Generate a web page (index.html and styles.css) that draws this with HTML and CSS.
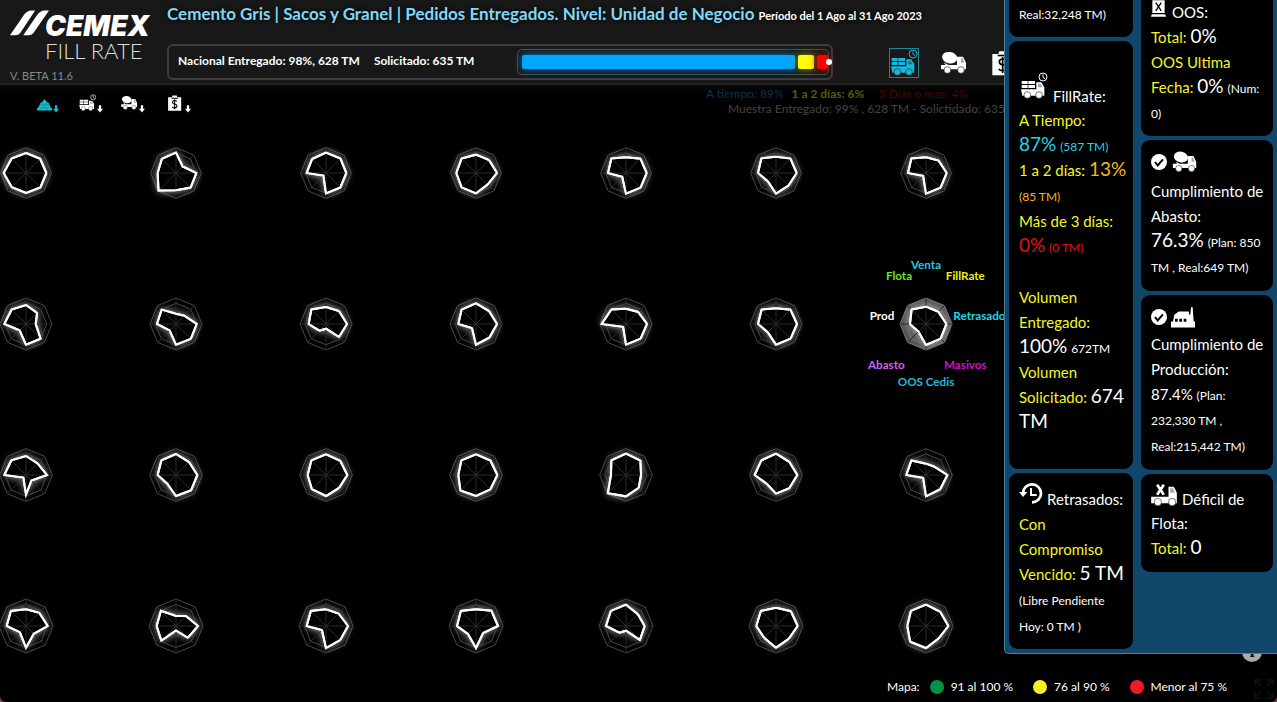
FILE: index.html
```html
<!DOCTYPE html>
<html lang="es">
<head>
<meta charset="utf-8">
<title>CEMEX Fill Rate</title>
<link rel="stylesheet" href="styles.css">
</head>
<body>
<svg class="defs" aria-hidden="true">
  <symbol id="truck" viewBox="0 0 90 90">
    <path d="M8 30h18v9H8zM28 30h20v9H28zM8 42h18v9H8zM28 42h20v9H28z"/>
    <path d="M6 55h46V34h15l9 15v25H10z"/>
    <path class="cut" d="M57 38h8l6 11H57z" fill-opacity=".35"/>
    <circle class="wheel" cx="25" cy="72" r="10"/><circle class="wheel" cx="60" cy="72" r="10"/>
    <circle cx="72" cy="18" r="12" fill="none" stroke="currentColor" stroke-width="3"/>
    <path d="M72 10v9l6 4" fill="none" stroke="currentColor" stroke-width="3"/>
  </symbol>
  <symbol id="mixer" viewBox="0 0 90 90">
    <ellipse cx="32" cy="29" rx="23" ry="17" transform="rotate(12 32 29)"/>
    <path d="M14 43l14 8h28l2-7v18h-4V26h18l9 18v20H6V51h14z"/>
    <path class="cut" d="M66 30h4l6 14H66z" fill-opacity=".35"/>
    <circle class="wheel" cx="25" cy="66" r="10"/><circle class="wheel" cx="66" cy="66" r="10"/>
  </symbol>
  <symbol id="clip" viewBox="0 0 90 90">
    <path d="M10 18h18l3-8h20l3 8h18v64H10z"/>
    <path class="cut" d="M26 20h30v5H26z"/>
    <path class="cutline" d="M52 38q-4-5-11-5-10 0-10 8t10 9 11 9-11 9q-8 0-12-5M41 27v48" fill="none" stroke-width="5"/>
  </symbol>
  <symbol id="pile" viewBox="0 0 90 90">
    <path d="M45 12l14 16 10 6 8 18 12 16q0 8-8 8H8q-8 0-6-8l12-16 8-18 9-6z"/>
    <path class="cutline" d="M20 44h50M12 60h66M34 28v16M56 28v16M28 60v16M58 60v16M45 44v16" fill="none" stroke-width="3" opacity=".4"/>
  </symbol>
  <symbol id="check" viewBox="0 0 24 24">
    <circle cx="12" cy="12" r="12"/><path class="cutline" d="M6 12l4 5 8-9" fill="none" stroke-width="3"/>
  </symbol>
  <symbol id="factory" viewBox="0 0 72 62">
    <path d="M0 61V43h6l4-20 13-10h30l2 10h3L60 0h5l3 43h4v18z"/>
    <path class="cut" d="M12 35h8v9h-8zM25 35h8v9h-8zM38 35h8v9h-8z"/>
  </symbol>
  <symbol id="history" viewBox="0 0 72 66">
    <path d="M12 33a27 27 0 1 1 27 28" fill="none" stroke="currentColor" stroke-width="8"/>
    <path d="M0 30h25L12 45zM33 18h6v18h14v6H33z"/>
  </symbol>
  <symbol id="xtruck" viewBox="0 0 80 66">
    <path d="M0 38h52V8h16l9 18v32H0z"/>
    <path class="cut" d="M57 13h8l6 13H57z" fill-opacity=".35"/>
    <path d="M18 2l20 30M38 2L18 32" fill="none" stroke="currentColor" stroke-width="8"/>
    <circle class="wheel" cx="20" cy="54" r="11"/><circle class="wheel" cx="63" cy="54" r="11"/>
  </symbol>
  <symbol id="xbox" viewBox="0 0 44 48">
    <path d="M4 0h36v36l4 12H0l4-12z"/><path class="cutline" d="M14 7l16 24M30 7L14 31M2 39h40" fill="none" stroke-width="4"/>
  </symbol>
  <symbol id="down" viewBox="0 0 16 20"><path d="M5 0h6v9h5l-8 10L0 9h5z"/></symbol>
</svg>
<div class="app">
  <header class="top">
    <div class="brand">
      <div class="logo">
        <svg class="slashes" viewBox="0 0 118 76"><path d="M0 75L42 14Q52 0 64 0h12L32 67q-5 8-14 8zM40 75L82 14Q92 0 104 0h14L72 67q-5 8-14 8z"/></svg>
        <span class="cemex">CEMEX</span>
      </div>
      <div class="fill">FILL RATE</div>
      <div class="version">V. BETA 11.6</div>
    </div>
    <div class="summary">
      <h1>Cemento Gris | Sacos y Granel | Pedidos Entregados. Nivel: Unidad de Negocio <small>Período del 1 Ago al 31 Ago 2023</small></h1>
      <div class="row">
        <div class="totals">
          <span class="amounts"><span>Nacional Entregado: 98%, 628 TM</span><span>Solicitado: 635 TM</span></span>
          <div class="meter"><i class="seg blue"></i><i class="seg yellow"></i><i class="seg red"></i><i class="dot"></i></div>
        </div>
        <nav class="modes">
          <button class="mode active" aria-label="Fill rate"><svg><use href="#truck"/></svg></button>
          <button class="mode" aria-label="Abasto"><svg><use href="#mixer"/></svg></button>
          <button class="mode" aria-label="Pedidos"><svg><use href="#clip"/></svg></button>
        </nav>
      </div>
    </div>
  </header>
  <main class="map">
    <div class="strip">
      <nav class="tools">
        <button class="tool cyan" aria-label="Venta"><svg class="ico"><use href="#pile"/></svg><svg class="arr"><use href="#down"/></svg></button>
        <button class="tool" aria-label="Fill rate"><svg class="ico"><use href="#truck"/></svg><svg class="arr"><use href="#down"/></svg></button>
        <button class="tool" aria-label="Abasto"><svg class="ico"><use href="#mixer"/></svg><svg class="arr"><use href="#down"/></svg></button>
        <button class="tool" aria-label="Pedidos"><svg class="ico"><use href="#clip"/></svg><svg class="arr"><use href="#down"/></svg></button>
      </nav>
      <div class="sample">
        <div class="days"><span class="d1">A tiempo: 89%</span><b class="d2">1 a 2 días: 6%</b><span class="d3">3 Días o mas: 4%</span></div>
        <div class="muestra">Muestra Entregado: 99% , 628 TM - Solictidado: 635 TM</div>
      </div>
    </div>
    <div class="radars" id="radars"></div>
    <footer class="legend">
      <span>Mapa:</span>
      <span class="key"><i class="green"></i>91 al 100 %</span>
      <span class="key"><i class="amber"></i>76 al 90 %</span>
      <span class="key"><i class="crimson"></i>Menor al 75 %</span>
    </footer>
    <button class="info" aria-label="Información">i</button>
    <button class="expand" aria-label="Pantalla completa"><svg viewBox="0 0 20 20"><path d="M1 7V1h6M1 1l6 6M13 1h6v6M19 1l-6 6M1 13v6h6M1 19l6-6M19 13v6h-6M19 19l-6-6"/></svg></button>
  </main>
  <aside class="panel">
    <div class="col">
      <section class="card first"><p class="s">Real:32,248 TM)</p></section>
      <section class="card fillrate">
        <h2><svg class="i-truck"><use href="#truck"/></svg> FillRate:</h2>
        <p class="y">A Tiempo:</p>
        <p class="c"><b>87%</b> <small>(587 TM)</small></p>
        <p class="o"><span class="y">1 a 2 días:</span> <b>13%</b></p>
        <p class="s o">(85 TM)</p>
        <p class="y">Más de 3 días:</p>
        <p class="r"><b>0%</b> <small>(0 TM)</small></p>
        <div class="gap"></div>
        <p class="y">Volumen</p>
        <p class="y">Entregado:</p>
        <p><b>100%</b> <small>672TM</small></p>
        <p class="y">Volumen</p>
        <p><span class="y">Solicitado:</span> <b>674</b></p>
        <p><b>TM</b></p>
      </section>
      <section class="card late">
        <h2><svg class="i-hist"><use href="#history"/></svg> Retrasados:</h2>
        <p class="y">Con</p>
        <p class="y">Compromiso</p>
        <p><span class="y">Vencido:</span> <b>5 TM</b></p>
        <p class="s">(Libre Pendiente</p>
        <p class="s">Hoy: 0 TM )</p>
      </section>
    </div>
    <div class="col">
      <section class="card oos">
        <h2><svg class="i-box"><use href="#xbox"/></svg> OOS:</h2>
        <p><span class="y">Total:</span> <b>0%</b></p>
        <p class="y">OOS Ultima</p>
        <p><span class="y">Fecha:</span> <b>0%</b> <small>(Num:</small></p>
        <p class="s">0)</p>
      </section>
      <section class="card supply">
        <div class="icons"><svg class="i-check"><use href="#check"/></svg><svg class="i-mixer"><use href="#mixer"/></svg></div>
        <p>Cumplimiento de</p>
        <p>Abasto:</p>
        <p><b>76.3%</b> <small>(Plan: 850</small></p>
        <p class="s">TM , Real:649 TM)</p>
      </section>
      <section class="card prod">
        <div class="icons"><svg class="i-check"><use href="#check"/></svg><svg class="i-fact"><use href="#factory"/></svg></div>
        <p>Cumplimiento de</p>
        <p>Producción:</p>
        <p>87.4% <small>(Plan:</small></p>
        <p class="s">232,330 TM ,</p>
        <p class="s">Real:215,442 TM)</p>
      </section>
      <section class="card fleet">
        <h2><svg class="i-xtruck"><use href="#xtruck"/></svg> Déficil de</h2>
        <p>Flota:</p>
        <p><span class="y">Total:</span> <b>0</b></p>
      </section>
    </div>
  </aside>
</div>
<script src="radars.js"></script>
</body>
</html>
```
FILE: styles.css
```css
* { box-sizing: border-box; }
html { background: #6b4a54; height: 100%; }
body { margin: 0; height: 100%; font-family: Lato, "Open Sans", sans-serif; color: #fff; }
button { border: 0; padding: 0; background: none; color: inherit; cursor: pointer; }
p, h1, h2 { margin: 0; }
svg { fill: currentColor; display: block; }
.defs { position: absolute; width: 0; height: 0; }
.cut { fill: #000; }
.cutline { stroke: #000; }
.wheel { stroke: #333; stroke-width: 2; }
.app { position: relative; height: 100%; display: flex; flex-direction: column; overflow: hidden; background: #000; border-radius: 0 0 6px 6px; }

.top { display: flex; height: 85px; background: #181818; border-bottom: 2px solid #222; box-shadow: 0 2px 8px #111; }
.brand { width: 167px; padding: 10px 0 0 10px; }
.logo { display: flex; height: 28px; }
.slashes { width: 39px; height: 26px; }
.cemex { font: italic 900 28px/28px Inter, sans-serif; margin-left: -4px; padding-top: 2px; height: 28px; }
.fill { font: 300 22px/24px Lato, sans-serif; margin-left: 35px; padding-top: 1px; color: #ddd; }
.version { font-size: 11px; line-height: 25px; color: #888; }
.summary { flex: 1; min-width: 0; }
h1 { font-size: 17px; line-height: 28px; color: #80d8f6; white-space: nowrap; text-shadow: 0 0 5px #000; }
h1 small { font-size: 11px; color: #fff; }
.row { display: flex; margin-top: 16px; gap: 56px; }
.totals { width: 666px; height: 36px; display: flex; align-items: center; justify-content: space-between; padding: 0 4px 0 9px; border: 2px solid #3d3d3d; border-radius: 6px; }
.amounts { display: flex; gap: 14px; font-size: 12px; font-weight: 700; line-height: 28px; padding-bottom: 2px; white-space: nowrap; }
.meter { position: relative; display: flex; gap: 3px; width: 312px; height: 26px; padding: 5px 0 5px 4px; border: 1px solid #41505a; border-radius: 5px; margin-right: -2px; }
.seg { border-radius: 2px; }
.blue { flex: 1; background: #00a6ff; box-shadow: 0 0 9px #0077b8; }
.yellow { width: 16px; background: #ff0; box-shadow: 0 0 9px #990; }
.red { width: 11px; background: #f00; box-shadow: 0 0 10px #b00; }
.dot { position: absolute; right: -4px; top: 9px; width: 6px; height: 6px; border-radius: 50%; background: #fff; }
.modes { display: flex; gap: 20px; padding-top: 4px; }
.mode { width: 30px; height: 30px; }
.mode svg { width: 30px; height: 30px; }
.mode.active { color: #1cb5dc; outline: 1px solid #25858e; outline-offset: -1px; }
h1 { height: 28px; }

.map { position: relative; flex: 1; min-height: 0; display: flex; flex-direction: column; overflow: hidden; }
.strip { display: flex; justify-content: space-between; height: 13px; }
.tools { display: flex; gap: 18px; padding: 8px 0 0 36px; }
.tool { display: flex; align-items: flex-end; width: 24px; height: 20px; }
.tool .ico { width: 19px; height: 20px; flex: none; }
.tool .arr { width: 6px; height: 8px; flex: none; }
.tool:first-child .ico { height: 16px; width: 17px; }
.cyan { color: #0fc0d0; }
.tool:last-child { margin-left: 4px; }
.sample { width: 571px; font-size: 12px; line-height: 15px; color: #444; white-space: nowrap; z-index: 1; padding-top: 1px; }
.days { display: flex; gap: 8px; }
.d1 { color: #073450; }
.d2 { color: #5a5a07; }
.d3 { color: #4c0707; margin-left: 6px; }
.muestra { padding-left: 22px; }
.radars { display: grid; grid-template-columns: repeat(7, 150px); grid-auto-rows: 151px; margin-left: -49px; margin-top: -1px; }
.radar { place-self: center; width: 60px; height: 60px; overflow: visible; }
.web { fill: none; stroke: #484848; stroke-width: 3; }
.spoke { stroke: #2b2b2b; stroke-width: 3; fill: none; }
.halo { fill: #fff; filter: drop-shadow(0 0 12px #fff) drop-shadow(0 0 6px #888); opacity: .6; }
.shape { fill: #000; stroke: #fff; stroke-width: 6; }
.outline { fill: none; stroke: #fff; stroke-width: 6; }
.inner { fill: none; }
.hot .web { fill: #555; stroke: #777; }
.hot .inner { fill: none; }
.radar text { font: 700 35px Lato, sans-serif; text-anchor: middle; }
.legend { position: absolute; left: 887px; bottom: 4px; display: flex; font-size: 12px; line-height: 22px; white-space: nowrap; }
.key { display: flex; align-items: center; gap: 7px; margin-left: 10px; }
.key + .key { margin-left: 20px; }
.key i { width: 14px; height: 14px; border-radius: 50%; }
.green { background: #009245; }
.amber { background: #fcee21; }
.crimson { background: #ed1c24; }
.info { position: absolute; right: 15px; bottom: 40px; width: 20px; height: 20px; border-radius: 50%; background: #aaa; color: #000; font: 700 17px/18px "Liberation Serif", serif; }
.expand { position: absolute; right: 3px; bottom: 3px; width: 20px; height: 20px; }
.expand path { fill: none; stroke: #0e0e0e; stroke-width: 2; }

.panel { position: absolute; top: 0; right: 0; width: 273px; display: flex; gap: 8px; padding: 0 4px 4px; background: #11476b; border: 1px solid #4d7f9b; border-width: 0 0 1px 1px; border-radius: 0 0 0 5px; z-index: 2; }
.col { display: flex; flex-direction: column; gap: 4px; width: 124px; }
.col + .col { flex: 1; }
.card { background: #000; border-radius: 9px; padding: 12px 0 10px 10px; white-space: nowrap; font-size: 15px; }
.card p, .card h2 { font-size: 15px; font-weight: 400; line-height: 25px; height: 25px; }
.card b { font-size: 19px; line-height: 19px; font-weight: 400; }
.card small, .card .s { font-size: 12px; }
.card small { line-height: 12px; }
.card .s { height: 26px; line-height: 27px; }
.card .y { color: #f5f520; }
.c { color: #1fd5e5; }
.o { color: #f9b41b; }
.r { color: #e11313; }
.card.first { border-radius: 0 0 9px 9px; height: 37px; padding-top: 1px; }
.fillrate { height: 428px; padding-top: 30px; }
.card.fillrate h2 { height: 37px; line-height: 50px; display: flex; gap: 4px; }
.gap { height: 26px; }
.late { height: 176px; padding-top: 9px; }
.card.late h2 { height: 30px; line-height: 34px; display: flex; gap: 4px; }
.card.oos { border-radius: 0 0 9px 9px; height: 136px; padding-top: 0; }
.card.oos h2 { display: flex; gap: 6px; }
.supply { height: 151px; }
.prod { height: 175px; }
.card.fleet { height: 98px; padding-top: 10px; }
.card.fleet h2 { height: 27px; line-height: 31px; display: flex; gap: 4px; }
.icons { display: flex; align-items: center; gap: 4px; height: 20px; margin-bottom: 5px; }
.supply .icons { margin-bottom: 7px; }
.i-truck { width: 30px; height: 30px; }
.i-hist { width: 24px; height: 22px; }
.i-box { width: 15px; height: 17px; }
.i-check { width: 16px; height: 16px; }
.i-mixer { width: 28px; height: 28px; }
.i-fact { width: 24px; height: 21px; }
.i-xtruck { width: 27px; height: 22px; }
```
FILE: radars.js
```js
// Radii run clockwise from the top axis; each row has its own outer radius.
const rows = [
  { outer: 76, data: [
    [60,60,61,61,60,60,67,61],[61,28,61,62,52,74,55,60],[61,61,61,61,61,11,58,59],
    [55,55,63,49,61,61,59,61],[47,61,62,62,62,16,54,62],[49,61,62,53,62,35,54,62],[47,53,62,62,62,12,54,62]] },
  { outer: 78, data: [
    [57,47,29,62,62,27,65,61],[31,35,62,63,62,27,57,61],[51,55,63,55,14,28,52,62],
    [62,55,63,57,62,17,53,61],[46,51,63,62,62,12,73,62],[47,61,63,62,62,35,54,61],[52,52,61,62,63,32,48,61]] },
  { outer: 79, data: [
    [57,49,63,23,59,11,65,62],[63,55,64,64,63,37,55,62],[62,60,64,55,63,60,55,62],
    [62,61,64,61,63,66,53,62],[64,61,45,54,64,77,45,62],[64,56,64,56,56,38,64,62],[34,35,64,60,64,12,59,62]] },
  { outer: 81, data: [
    [50,56,65,33,65,26,58,64],[30,42,66,50,13,62,58,64],[50,53,66,60,66,17,58,64],
    [50,65,66,30,66,34,57,64],[64,50,56,59,14,28,60,64],[55,63,65,54,65,50,59,64],[64,60,67,53,66,67,56,64]] }
];
const labels = [
  ['Venta', 0, -166, '#2bc4e2'], ['FillRate', 118, -132, '#e8f01c'], ['Retrasados', 168, -12, '#19dbe8'],
  ['Masivos', 118, 135, '#cc14c4'], ['OOS Cedis', 0, 186, '#26b5dd'], ['Abasto', -119, 135, '#cf63e8'],
  ['Prod', -132, -12, '#fff'], ['Flota', -81, -132, '#6be51e']
];
const points = radii => radii.map((r, i) => {
  const a = i * Math.PI / 4;
  return (r * Math.sin(a)).toFixed(1) + ',' + (-r * Math.cos(a)).toFixed(1);
}).join(' ');
const ring = r => points(Array(8).fill(r));
let html = '';
rows.forEach((row, y) => row.data.forEach((d, x) => {
  const hot = y === 1 && x === 6;
  const o = row.outer;
  const k = o * 0.707;
  html += `<svg class="radar${hot ? ' hot' : ''}" viewBox="-90 -90 180 180">
    <polygon class="web" points="${ring(o)}"/>
    <polygon class="halo" points="${points(d)}"/>
    <polygon class="web inner" points="${ring(o * 0.8)}"/>
    <polygon class="shape" points="${points(d)}"/>
    <path class="spoke" d="M0 ${-o}V${o}M${-o} 0H${o}M${-k} ${-k}L${k} ${k}M${-k} ${k}L${k} ${-k}"/>
    <polygon class="outline" points="${points(d)}"/>
    ${hot ? labels.map(l => `<text x="${l[1]}" y="${l[2]}" fill="${l[3]}">${l[0]}</text>`).join('') : ''}
  </svg>`;
}));
document.getElementById('radars').innerHTML = html;
```
